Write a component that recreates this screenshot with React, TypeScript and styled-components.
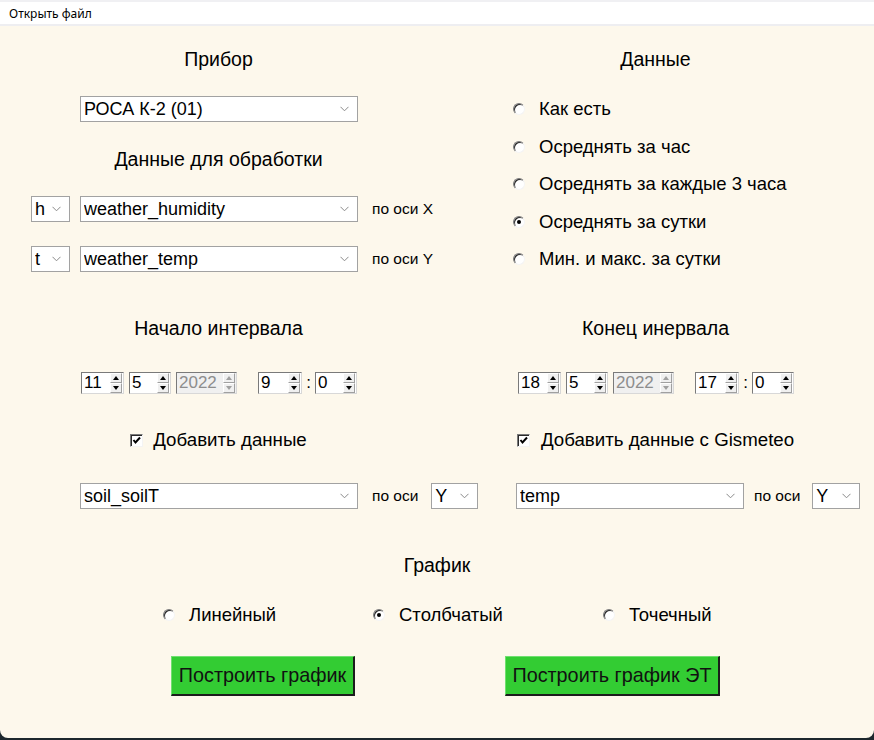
import React from "react";
import styled, { createGlobalStyle } from "styled-components";

const GlobalStyle = createGlobalStyle`
  html, body { margin: 0; padding: 0; background: #1d272d; }
  body { font-family: "Liberation Sans", Arial, sans-serif; color: #000; }
  * { box-sizing: border-box; }
`;

const Window = styled.div`
  width: 874px;
  height: 738px;
  background: #fdf8ec;
  border-bottom-left-radius: 8px;
  border-bottom-right-radius: 8px;
  overflow: hidden;
  display: flex;
  flex-direction: column;
`;

const MenuBar = styled.div`
  height: 26px;
  background: #fff;
  border-top: 2px solid #f0f0f3;
  border-bottom: 2px solid #eeeef1;
  display: flex;
  align-items: center;
  padding-left: 9px;
  font-family: "Noto Sans", "Open Sans", sans-serif;
  font-size: 12px;
  color: #000;
`;

const Content = styled.div`
  padding-top: 19px;
  display: flex;
  flex-direction: column;
`;

const TwoCols = styled.div<{ $mt?: number }>`
  display: grid;
  grid-template-columns: 437px 437px;
  margin-top: ${(p) => p.$mt ?? 0}px;
`;

const Column = styled.div`
  display: flex;
  flex-direction: column;
`;

const Title = styled.div<{ $mt?: number }>`
  height: 28px;
  line-height: 28px;
  text-align: center;
  font-size: 19.5px;
  margin-top: ${(p) => p.$mt ?? 0}px;
  white-space: nowrap;
`;

const Row = styled.div<{ $mt?: number; $pl?: number }>`
  display: flex;
  align-items: center;
  margin-top: ${(p) => p.$mt ?? 0}px;
  padding-left: ${(p) => p.$pl ?? 0}px;
`;

const SelectBox = styled.div<{ $w: number; $ml?: number }>`
  width: ${(p) => p.$w}px;
  height: 26px;
  margin-left: ${(p) => p.$ml ?? 0}px;
  background: #fff;
  border: 1px solid #a2a2a2;
  display: flex;
  align-items: center;
  padding-left: 3px;
  padding-right: 8px;
  font-size: 18px;
  flex-shrink: 0;
`;

const SelectText = styled.span`
  flex: 1;
  white-space: nowrap;
  overflow: hidden;
`;

const Chevron = () => (
  <svg width="9" height="6" viewBox="0 0 9 6">
    <polyline points="0.5,0.8 4.5,4.8 8.5,0.8" fill="none" stroke="#8a8a8a" strokeWidth="1" />
  </svg>
);

const Select = ({ w, ml, value }: { w: number; ml?: number; value: string }) => (
  <SelectBox $w={w} $ml={ml}>
    <SelectText>{value}</SelectText>
    <Chevron />
  </SelectBox>
);

const AxisLabel = styled.span<{ $ml: number; $mr?: number }>`
  font-size: 15.5px;
  margin-left: ${(p) => p.$ml}px;
  margin-right: ${(p) => p.$mr ?? 0}px;
  white-space: nowrap;
`;

const RadioList = styled.div`
  display: flex;
  flex-direction: column;
  gap: 13.5px;
  margin-top: 24px;
  padding-left: 76px;
`;

const RadioItem = styled.div<{ $w?: number }>`
  display: flex;
  align-items: center;
  height: 24px;
  gap: 14px;
  font-size: 18.5px;
  white-space: nowrap;
  width: ${(p) => (p.$w ? `${p.$w}px` : "auto")};
  flex-shrink: 0;
`;

const RadioDot = styled.span<{ $on?: boolean }>`
  width: 12px;
  height: 12px;
  border-radius: 50%;
  background: #fff;
  border: 1px solid;
  border-color: #7a7a7a #f4f4f4 #f4f4f4 #7a7a7a;
  box-shadow: inset 1px 1px 0 #2a2a2a;
  position: relative;
  flex-shrink: 0;
  &::after {
    content: "";
    display: ${(p) => (p.$on ? "block" : "none")};
    position: absolute;
    left: 3px;
    top: 3px;
    width: 4px;
    height: 4px;
    border-radius: 50%;
    background: #000;
  }
`;

const Radio = ({ on, label, w }: { on?: boolean; label: string; w?: number }) => (
  <RadioItem $w={w}>
    <RadioDot $on={on} />
    <span>{label}</span>
  </RadioItem>
);

const SpinRow = styled.div`
  display: flex;
  align-items: center;
  margin-top: 30px;
  padding-left: 81px;
  height: 22px;
`;

const SpinBox = styled.div<{ $w: number; $ml?: number; $disabled?: boolean }>`
  width: ${(p) => p.$w}px;
  height: 22px;
  margin-left: ${(p) => p.$ml ?? 0}px;
  background: ${(p) => (p.$disabled ? "#f0f0f0" : "#fff")};
  color: ${(p) => (p.$disabled ? "#8d8d8d" : "#000")};
  border: 1px solid;
  border-color: #7a7a7a #d8d8d8 #d8d8d8 #7a7a7a;
  display: flex;
  align-items: center;
  font-size: 17px;
  padding-left: 2px;
`;

const SpinValue = styled.span`
  flex: 1;
`;

const SpinArrows = styled.div`
  width: 12px;
  height: 20px;
  display: flex;
  flex-direction: column;
  margin-right: 1px;
`;

const SpinHalf = styled.div<{ $down?: boolean; $disabled?: boolean }>`
  flex: 1;
  background: #f0f0f0;
  border: 1px solid;
  border-color: #fff #a0a0a0 #a0a0a0 #fff;
  display: flex;
  align-items: center;
  justify-content: center;
  &::after {
    content: "";
    width: 0;
    height: 0;
    border-left: 3.5px solid transparent;
    border-right: 3.5px solid transparent;
    ${(p) =>
      p.$down
        ? `border-top: 4px solid ${p.$disabled ? "#a0a0a0" : "#000"};`
        : `border-bottom: 4px solid ${p.$disabled ? "#a0a0a0" : "#000"};`}
  }
`;

const Spin = ({ w, ml, value, disabled }: { w: number; ml?: number; value: string; disabled?: boolean }) => (
  <SpinBox $w={w} $ml={ml} $disabled={disabled}>
    <SpinValue>{value}</SpinValue>
    <SpinArrows>
      <SpinHalf $disabled={disabled} />
      <SpinHalf $down $disabled={disabled} />
    </SpinArrows>
  </SpinBox>
);

const Colon = styled.span`
  width: 13px;
  text-align: center;
  font-size: 17px;
`;

const CheckRow = styled.div<{ $gap: number }>`
  display: flex;
  align-items: center;
  justify-content: center;
  height: 24px;
  margin-top: 34px;
  gap: ${(p) => p.$gap}px;
  font-size: 18.7px;
  white-space: nowrap;
`;

const CheckBox = styled.span`
  width: 13px;
  height: 13px;
  background: #fff;
  border: 1px solid;
  border-color: #7a7a7a #f4f4f4 #f4f4f4 #7a7a7a;
  box-shadow: inset 1px 1px 0 #2a2a2a;
  display: flex;
  align-items: center;
  justify-content: center;
  flex-shrink: 0;
`;

const Check = () => (
  <CheckBox>
    <svg width="9" height="9" viewBox="0 0 9 9">
      <polyline points="1.5,4 3.5,6.5 8,1.5" fill="none" stroke="#000" strokeWidth="2" />
    </svg>
  </CheckBox>
);

const ChartTitle = styled(Title)`
  margin-top: 42px;
`;

const GreenButton = styled.button<{ $w: number }>`
  width: ${(p) => p.$w}px;
  height: 40px;
  background: #33cc33;
  border: none;
  border-top: 1px solid #6fe06f;
  border-left: 1px solid #6fe06f;
  border-right: 2px solid #1c1c1c;
  border-bottom: 2px solid #1c1c1c;
  font-family: "Liberation Sans", Arial, sans-serif;
  font-size: 19.8px;
  color: #111;
  padding: 0;
  white-space: nowrap;
  flex-shrink: 0;
`;

const ButtonRow = styled.div`
  display: flex;
  margin-top: 29px;
  padding-left: 171px;
  gap: 150px;
`;

export default function App() {
  return (
    <>
      <GlobalStyle />
      <Window>
        <MenuBar>Открыть файл</MenuBar>
        <Content>
          <TwoCols>
            <Column>
              <Title>Прибор</Title>
              <Row $mt={23}>
                <Select w={278} ml={80} value="РОСА К-2 (01)" />
              </Row>
              <Title $mt={23}>Данные для обработки</Title>
              <Row $mt={23} $pl={31}>
                <Select w={39} value="h" />
                <Select w={278} ml={10} value="weather_humidity" />
                <AxisLabel $ml={14}>по оси X</AxisLabel>
              </Row>
              <Row $mt={24} $pl={31}>
                <Select w={39} value="t" />
                <Select w={278} ml={10} value="weather_temp" />
                <AxisLabel $ml={14}>по оси Y</AxisLabel>
              </Row>
            </Column>
            <Column>
              <Title>Данные</Title>
              <RadioList>
                <Radio label="Как есть" />
                <Radio label="Осреднять за час" />
                <Radio label="Осреднять за каждые 3 часа" />
                <Radio on label="Осреднять за сутки" />
                <Radio label="Мин. и макс. за сутки" />
              </RadioList>
            </Column>
          </TwoCols>

          <TwoCols $mt={42}>
            <Column>
              <Title>Начало интервала</Title>
              <SpinRow>
                <Spin w={43} value="11" />
                <Spin w={42} ml={5} value="5" />
                <Spin w={61} ml={5} value="2022" disabled />
                <Spin w={44} ml={21} value="9" />
                <Colon>:</Colon>
                <Spin w={42} value="0" />
              </SpinRow>
              <CheckRow $gap={10}>
                <Check />
                <span>Добавить данные</span>
              </CheckRow>
              <Row $mt={31} $pl={80}>
                <Select w={278} value="soil_soilT" />
                <AxisLabel $ml={14} $mr={13}>по оси</AxisLabel>
                <Select w={47} value="Y" />
              </Row>
            </Column>
            <Column>
              <Title>Конец инервала</Title>
              <SpinRow>
                <Spin w={43} value="18" />
                <Spin w={42} ml={5} value="5" />
                <Spin w={61} ml={5} value="2022" disabled />
                <Spin w={44} ml={21} value="17" />
                <Colon>:</Colon>
                <Spin w={42} value="0" />
              </SpinRow>
              <CheckRow $gap={11}>
                <Check />
                <span>Добавить данные с Gismeteo</span>
              </CheckRow>
              <Row $mt={31} $pl={79}>
                <Select w={228} value="temp" />
                <AxisLabel $ml={10} $mr={12}>по оси</AxisLabel>
                <Select w={48} value="Y" />
              </Row>
            </Column>
          </TwoCols>

          <ChartTitle>График</ChartTitle>
          <Row $mt={24} $pl={163}>
            <Radio w={210} label="Линейный" />
            <Radio w={230} on label="Столбчатый" />
            <Radio label="Точечный" />
          </Row>
          <ButtonRow>
            <GreenButton $w={184}>Построить график</GreenButton>
            <GreenButton $w={215}>Построить график ЭТ</GreenButton>
          </ButtonRow>
        </Content>
      </Window>
    </>
  );
}
